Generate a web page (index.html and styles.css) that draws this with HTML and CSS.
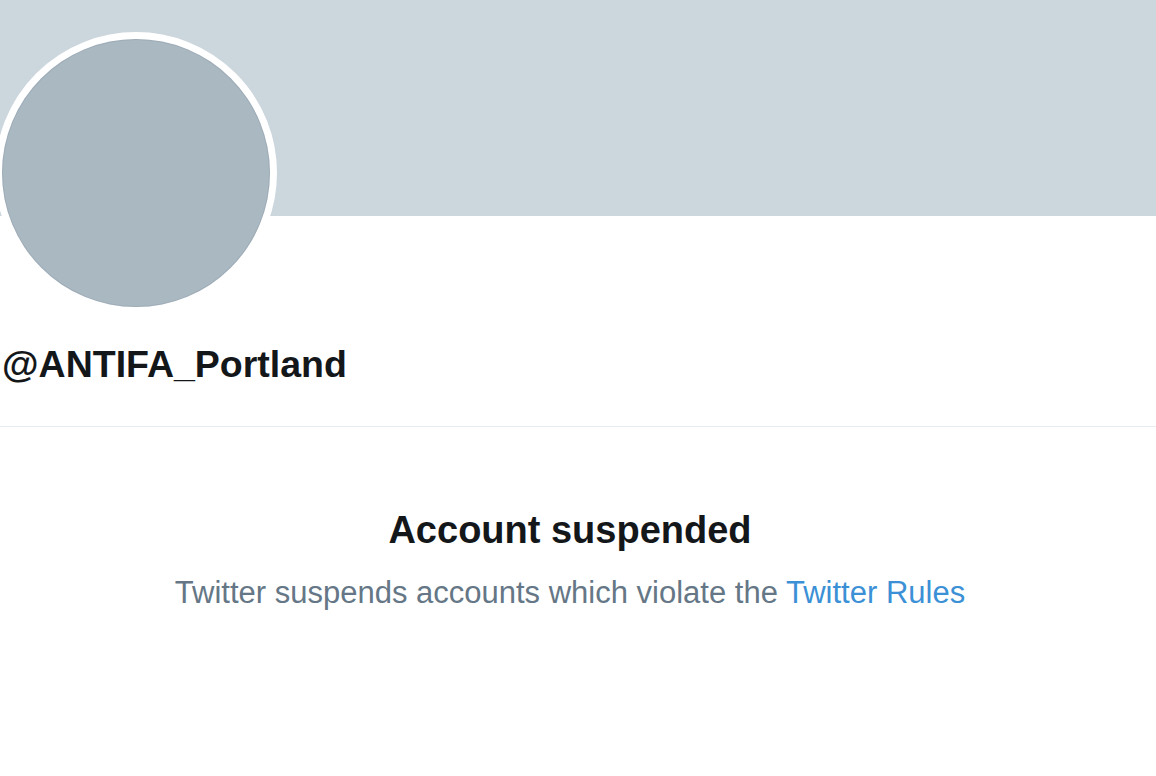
FILE: index.html
```html
<!DOCTYPE html>
<html lang="en">
<head>
<meta charset="utf-8">
<title>@ANTIFA_Portland</title>
<link rel="stylesheet" href="styles.css">
</head>
<body>
<div class="page">
  <header class="profile">
    <div class="banner"></div>
    <div class="avatar"><div class="avatar-inner"></div></div>
    <h1 class="handle">@ANTIFA_Portland</h1>
  </header>
  <section class="notice">
    <h2 class="notice-title">Account suspended</h2>
    <p class="notice-text">Twitter suspends accounts which violate the <a class="notice-link" href="#">Twitter Rules</a></p>
  </section>
</div>
</body>
</html>
```

FILE: styles.css
```css
html, body {
  margin: 0;
  padding: 0;
  background: #ffffff;
}

body {
  font-family: "Liberation Sans", Arial, sans-serif;
  color: #14171a;
  overflow: hidden;
}

.page {
  width: 1156px;
}

.profile {
  border-bottom: 1px solid #e6ecf0;
  padding-bottom: 40px;
}

.banner {
  height: 216px;
  background: #ccd6dd;
}

.avatar {
  width: 268px;
  height: 268px;
  margin-top: -184px;
  margin-left: -5px;
  border: 7px solid #ffffff;
  border-radius: 50%;
  background: #ffffff;
  position: relative;
}

.avatar-inner {
  width: 100%;
  height: 100%;
  border-radius: 50%;
  background: #aab8c2;
  box-shadow: inset 0 0 0 1px rgba(101, 119, 134, 0.18);
}

.handle {
  margin: 28px 0 0 2px;
  font-size: 37.5px;
  line-height: 44px;
  font-weight: 700;
  color: #14171a;
}

.notice {
  padding: 80px 16px 0 0;
  text-align: center;
}

.notice-title {
  margin: 0;
  font-size: 38px;
  line-height: 46px;
  font-weight: 700;
  color: #14171a;
}

.notice-text {
  margin: 20px 0 0;
  font-size: 31px;
  line-height: 40px;
  color: #657786;
}

.notice-link {
  color: #3b90d6;
  text-decoration: none;
}
```
